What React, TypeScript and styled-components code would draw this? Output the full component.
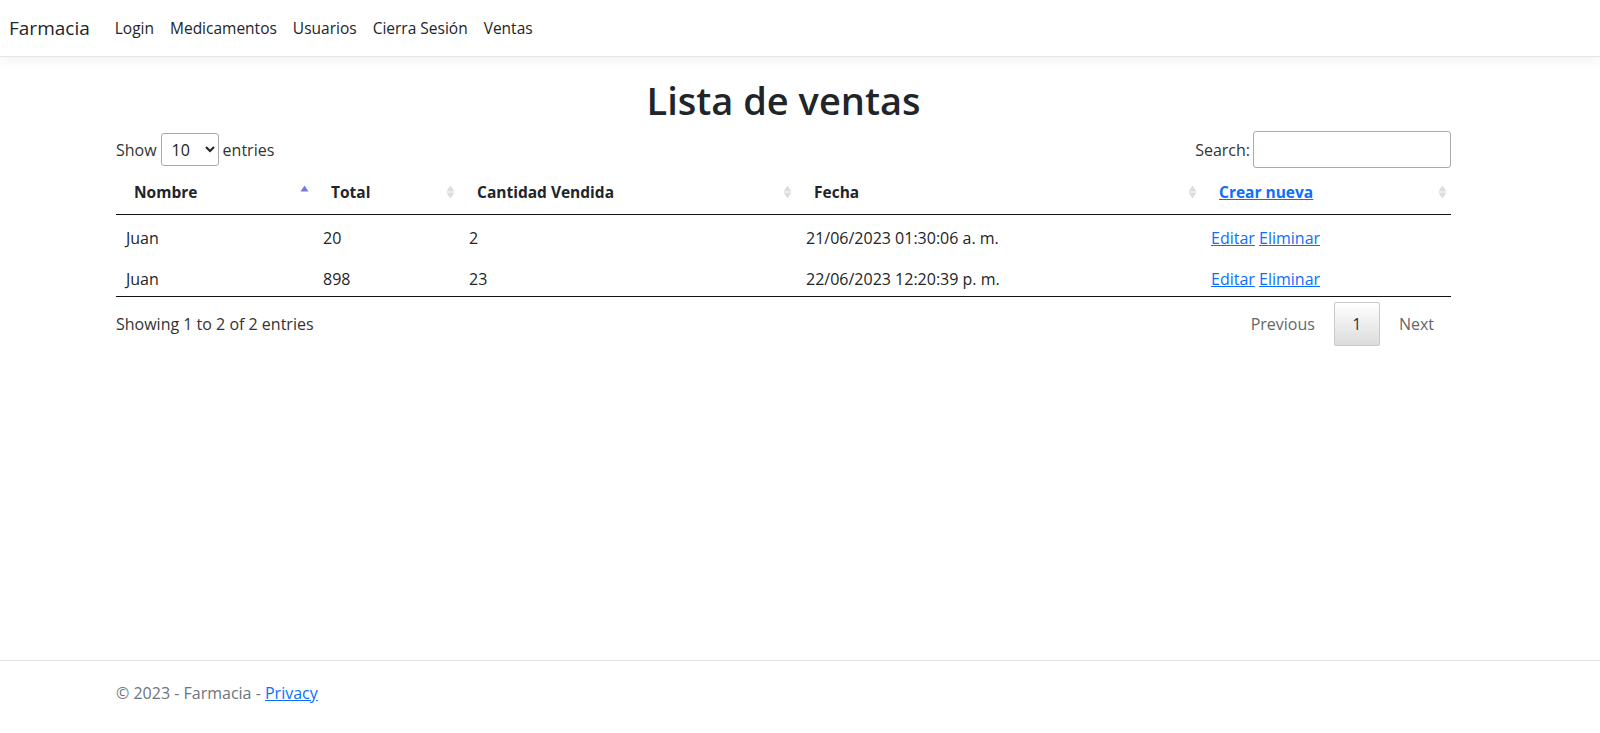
import styled, { createGlobalStyle } from "styled-components";

const GlobalStyle = createGlobalStyle`
  html, body {
    margin: 0;
    padding: 0;
  }
  body {
    font-family: "Open Sans", "Noto Sans", sans-serif;
    font-size: 16px;
    color: #212529;
    background: #fff;
  }
`;

const rows = [
  { nombre: "Juan", total: "20", cantidad: "2", fecha: "21/06/2023 01:30:06 a. m." },
  { nombre: "Juan", total: "898", cantidad: "23", fecha: "22/06/2023 12:20:39 p. m." },
];

const SortIcon = ({ active }: { active?: boolean }) => (
  <svg width="9" height="14" viewBox="0 0 9 14">
    <path d="M4.5 0.5 L8.5 6.5 L0.5 6.5 Z" fill={active ? "#7878d6" : "#dcdcdc"} />
    {!active && <path d="M4.5 13.5 L8.5 7.5 L0.5 7.5 Z" fill="#dcdcdc" />}
  </svg>
);

const columns = [
  { label: "Nombre", width: 197, active: true },
  { label: "Total", width: 146 },
  { label: "Cantidad Vendida", width: 337 },
  { label: "Fecha", width: 405 },
  { label: "Crear nueva", width: 250, link: true },
];

export default function App() {
  return (
    <Page>
      <GlobalStyle />
      <Navbar>
        <Brand>Farmacia</Brand>
        <NavList>
          {["Login", "Medicamentos", "Usuarios", "Cierra Sesión", "Ventas"].map((l) => (
            <NavLink key={l}>{l}</NavLink>
          ))}
        </NavList>
      </Navbar>
      <Main>
        <Title>Lista de ventas</Title>
        <TopControls>
          <LengthLabel>
            Show
            <Select defaultValue="10">
              <option>10</option>
              <option>25</option>
              <option>50</option>
              <option>100</option>
            </Select>
            entries
          </LengthLabel>
          <SearchLabel>
            Search:
            <SearchInput type="search" />
          </SearchLabel>
        </TopControls>
        <Table>
          <colgroup>
            {columns.map((c) => (
              <col key={c.label} style={{ width: c.width }} />
            ))}
          </colgroup>
          <thead>
            <tr>
              {columns.map((c) => (
                <Th key={c.label}>
                  {c.link ? <HeadLink href="#">{c.label}</HeadLink> : c.label}
                  <SortWrap>
                    <SortIcon active={c.active} />
                  </SortWrap>
                </Th>
              ))}
            </tr>
          </thead>
          <tbody>
            {rows.map((r, i) => (
              <tr key={i}>
                <Td>{r.nombre}</Td>
                <Td>{r.total}</Td>
                <Td>{r.cantidad}</Td>
                <Td>{r.fecha}</Td>
                <Td>
                  <Link href="#">Editar</Link> <Link href="#">Eliminar</Link>
                </Td>
              </tr>
            ))}
          </tbody>
        </Table>
        <BottomControls>
          <Info>Showing 1 to 2 of 2 entries</Info>
          <Paging>
            <PageButton>Previous</PageButton>
            <PageButton current>1</PageButton>
            <PageButton>Next</PageButton>
          </Paging>
        </BottomControls>
      </Main>
      <Footer>
        <FooterInner>
          © 2023 - Farmacia - <Link href="#">Privacy</Link>
        </FooterInner>
      </Footer>
    </Page>
  );
}

const Page = styled.div`
  height: 733px;
  display: flex;
  flex-direction: column;
  overflow: hidden;
`;

const Navbar = styled.nav`
  height: 57px;
  flex-shrink: 0;
  box-sizing: border-box;
  display: flex;
  align-items: center;
  padding: 0 9px;
  border-bottom: 1px solid #e3e6e9;
  box-shadow: 0 4px 12px rgba(0, 0, 0, 0.05);
`;

const Brand = styled.a`
  font-size: 19px;
  color: #212529;
  margin-right: 17px;
`;

const NavList = styled.div`
  display: flex;
`;

const NavLink = styled.a`
  padding: 8px;
  font-size: 15.5px;
  color: #212529;
`;

const Main = styled.main`
  flex: 1;
  margin: 0 149px 0 116px;
`;

const Title = styled.h1`
  margin: 21px 0 7px;
  text-align: center;
  font-size: 38px;
  font-weight: 600;
  line-height: 1.2;
`;

const TopControls = styled.div`
  display: flex;
  justify-content: space-between;
  align-items: center;
  height: 38px;
`;

const LengthLabel = styled.label`
  display: flex;
  align-items: center;
  gap: 4px;
  color: #333;
`;

const Select = styled.select`
  height: 33px;
  width: 58px;
  padding: 0 4px 0 6px;
  border: 1px solid #aaa;
  border-radius: 3px;
  font-family: inherit;
  font-size: 16px;
  color: #222;
  background: #fff;
`;

const SearchLabel = styled.label`
  display: flex;
  align-items: center;
  gap: 3px;
  color: #333;
`;

const SearchInput = styled.input`
  width: 198px;
  height: 37px;
  box-sizing: border-box;
  border: 1px solid #aaa;
  border-radius: 3px;
`;

const Table = styled.table`
  width: 100%;
  border-collapse: collapse;
  table-layout: fixed;
  margin-top: 2px;
  border-bottom: 1px solid #111;
`;

const Th = styled.th`
  position: relative;
  text-align: left;
  font-weight: 700;
  font-size: 15.5px;
  padding: 8px 18px;
  height: 44px;
  box-sizing: border-box;
  border-bottom: 1px solid #111;
`;

const SortWrap = styled.span`
  position: absolute;
  right: 4px;
  top: 11px;
`;

const HeadLink = styled.a`
  color: #0d6efd;
  text-decoration: underline;
`;

const Td = styled.td`
  padding: 11px 10px 5px;
  height: 41px;
  box-sizing: border-box;
`;

const Link = styled.a`
  color: #0d6efd;
  text-decoration: underline;
`;

const BottomControls = styled.div`
  display: flex;
  justify-content: space-between;
  align-items: center;
  margin-top: 5px;
`;

const Info = styled.div`
  color: #333;
`;

const Paging = styled.div`
  display: flex;
  align-items: center;
  gap: 2px;
  margin-right: 16px;
`;

const PageButton = styled.span<{ current?: boolean }>`
  padding: 10px 16px;
  min-width: 12px;
  text-align: center;
  color: ${({ current }) => (current ? "#333" : "#666")};
  border: 1px solid ${({ current }) => (current ? "#cacaca" : "transparent")};
  border-radius: 2px;
  background: ${({ current }) =>
    current ? "linear-gradient(to bottom, #fff 0%, #dcdcdc 100%)" : "transparent"};
  &:last-child {
    padding-right: 0;
  }
`;

const Footer = styled.footer`
  border-top: 1px solid #dee2e6;
  height: 73px;
  flex-shrink: 0;
  box-sizing: border-box;
`;

const FooterInner = styled.div`
  padding: 21px 0 0 116px;
  color: #6c757d;
`;
